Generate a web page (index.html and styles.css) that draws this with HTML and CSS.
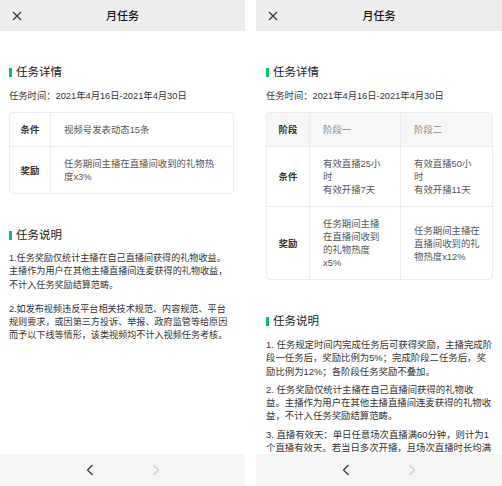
FILE: index.html
```html
<!DOCTYPE html>
<html lang="zh-CN">
<head>
<meta charset="utf-8">
<title>月任务</title>
<link rel="stylesheet" href="styles.css">
</head>
<body>
<div class="screens">
  <section class="screen screen-left">
    <header class="topbar">
      <span class="close"><svg width="10" height="10" viewBox="0 0 10 10"><path d="M1 1L9 9M9 1L1 9" stroke="#333" stroke-width="1.2" fill="none"/></svg></span>
      <h1 class="title">月任务</h1>
      <span></span>
    </header>
    <main class="content">
      <h2 class="sec-title">任务详情</h2>
      <p class="period">任务时间：2021年4月16日-2021年4月30日</p>
      <table class="task-table simple">
        <colgroup><col class="col-label-l"><col></colgroup>
        <tr><th class="label">条件</th><td class="data">视频号发表动态15条</td></tr>
        <tr><th class="label">奖励</th><td class="data">任务期间主播在直播间收到的礼物热<br>度x3%</td></tr>
      </table>
      <h2 class="sec-title sec-gap">任务说明</h2>
      <div class="notes notes-left">
        <p>1.任务奖励仅统计主播在自己直播间获得的礼物收益。<br>主播作为用户在其他主播直播间连麦获得的礼物收益，<br>不计入任务奖励结算范畴。</p>
        <p>2.如发布视频违反平台相关技术规范、内容规范、平台<br>规则要求，或因第三方投诉、举报、政府监管等给原因<br>而予以下线等情形，该类视频均不计入视频任务考核。</p>
      </div>
    </main>
    <footer class="pager">
      <svg class="chev" width="8" height="12" viewBox="0 0 8 12"><path d="M6.5 1L1.5 6L6.5 11" stroke="#333" stroke-width="1.2" fill="none"/></svg>
      <svg class="chev" width="8" height="12" viewBox="0 0 8 12"><path d="M1.5 1L6.5 6L1.5 11" stroke="#c9c9c9" stroke-width="1.2" fill="none"/></svg>
    </footer>
  </section>

  <section class="screen screen-right">
    <header class="topbar">
      <span class="close"><svg width="10" height="10" viewBox="0 0 10 10"><path d="M1 1L9 9M9 1L1 9" stroke="#333" stroke-width="1.2" fill="none"/></svg></span>
      <h1 class="title">月任务</h1>
      <span></span>
    </header>
    <main class="content">
      <h2 class="sec-title">任务详情</h2>
      <p class="period">任务时间：2021年4月16日-2021年4月30日</p>
      <table class="task-table staged">
        <colgroup><col class="col-label-r"><col class="col-stage1"><col></colgroup>
        <tr class="head-row"><th class="label">阶段</th><th class="data head">阶段一</th><th class="data head">阶段二</th></tr>
        <tr><th class="label">条件</th><td class="data">有效直播25小<br>时<br>有效开播7天</td><td class="data">有效直播50小<br>时<br>有效开播11天</td></tr>
        <tr><th class="label">奖励</th><td class="data">任务期间主播<br>在直播间收到<br>的礼物热度<br>x5%</td><td class="data">任务期间主播在<br>直播间收到的礼<br>物热度x12%</td></tr>
      </table>
      <h2 class="sec-title sec-gap">任务说明</h2>
      <div class="notes notes-right">
        <p>1. 任务规定时间内完成任务后可获得奖励，主播完成阶<br>段一任务后，奖励比例为5%；完成阶段二任务后，奖<br>励比例为12%；各阶段任务奖励不叠加。</p>
        <p>2. 任务奖励仅统计主播在自己直播间获得的礼物收<br>益。主播作为用户在其他主播直播间连麦获得的礼物收<br>益，不计入任务奖励结算范畴。</p>
        <p>3. 直播有效天：单日任意场次直播满60分钟，则计为1<br>个直播有效天。若当日多次开播，且场次直播时长均满</p>
      </div>
    </main>
    <footer class="pager">
      <svg class="chev" width="8" height="12" viewBox="0 0 8 12"><path d="M6.5 1L1.5 6L6.5 11" stroke="#333" stroke-width="1.2" fill="none"/></svg>
      <svg class="chev" width="8" height="12" viewBox="0 0 8 12"><path d="M1.5 1L6.5 6L1.5 11" stroke="#c9c9c9" stroke-width="1.2" fill="none"/></svg>
    </footer>
  </section>
</div>
</body>
</html>
```

FILE: styles.css
```css
html, body {
  margin: 0;
  padding: 0;
  background: #ffffff;
}

body {
  font-family: "Liberation Sans", "Noto Sans CJK SC", sans-serif;
  color: #333333;
}

.screens {
  display: flex;
  gap: 11px;
  height: 486px;
}

.screen {
  display: flex;
  flex-direction: column;
  height: 486px;
  overflow: hidden;
}

.screen-left { width: 245px; }
.screen-right { width: 246px; }

.topbar {
  flex: none;
  height: 31px;
  background: #ededed;
  display: grid;
  grid-template-columns: 1fr auto 1fr;
  align-items: center;
}

.close {
  display: flex;
  padding-left: 12px;
}

.title {
  margin: 0;
  font-size: 11px;
  font-weight: 500;
  color: #111111;
  line-height: 14px;
}

.content {
  flex: 1;
  min-height: 0;
  overflow: hidden;
  padding: 33px 11px 0 9px;
}

.screen-right .content {
  padding: 33px 9px 0 10px;
}

.sec-title {
  margin: 0;
  display: flex;
  align-items: center;
  gap: 4.5px;
  font-size: 11.5px;
  font-weight: 400;
  line-height: 16px;
  color: #222222;
}

.sec-title::before {
  content: "";
  width: 2.5px;
  height: 9px;
  background: #07c160;
}

.sec-gap {
  margin-top: 33px;
}

.period {
  margin: 9px 0 0;
  font-size: 9.3px;
  line-height: 14px;
  color: #333333;
}

.task-table {
  margin-top: 9px;
  width: 100%;
  table-layout: fixed;
  border-collapse: separate;
  border-spacing: 0;
  border: 1px solid #ececec;
  border-radius: 4px;
  font-size: 9.4px;
  line-height: 13px;
}

.col-label-l { width: 40px; }
.col-label-r { width: 42px; }
.col-stage1 { width: 91px; }

.task-table th,
.task-table td {
  padding: 10px 0 10px 13px;
  vertical-align: middle;
  text-align: left;
  white-space: nowrap;
}

.task-table tr + tr th,
.task-table tr + tr td {
  border-top: 1px solid #ececec;
}

.task-table .data {
  border-left: 1px solid #ececec;
  color: #555555;
  font-weight: 400;
}

.task-table .label {
  padding-left: 0;
  padding-right: 0;
  text-align: center;
  font-weight: 700;
  color: #333333;
}

.head-row th {
  background: #f7f7f7;
}

.head-row th:first-child { border-top-left-radius: 4px; }
.head-row th:last-child { border-top-right-radius: 4px; }

.task-table .head {
  color: #888888;
}

.notes {
  margin-top: 9px;
  line-height: 13.3px;
  color: #333333;
  white-space: nowrap;
}

.notes-left { font-size: 9.1px; }
.notes-right { font-size: 9.4px; }

.notes p {
  margin: 0;
}

.notes-left p + p { margin-top: 11px; }
.notes-right p + p { margin-top: 5px; }

.pager {
  flex: none;
  height: 32px;
  background: #f5f5f5;
  display: flex;
  justify-content: center;
  align-items: center;
  gap: 58px;
}

.chev { display: block; }
```
